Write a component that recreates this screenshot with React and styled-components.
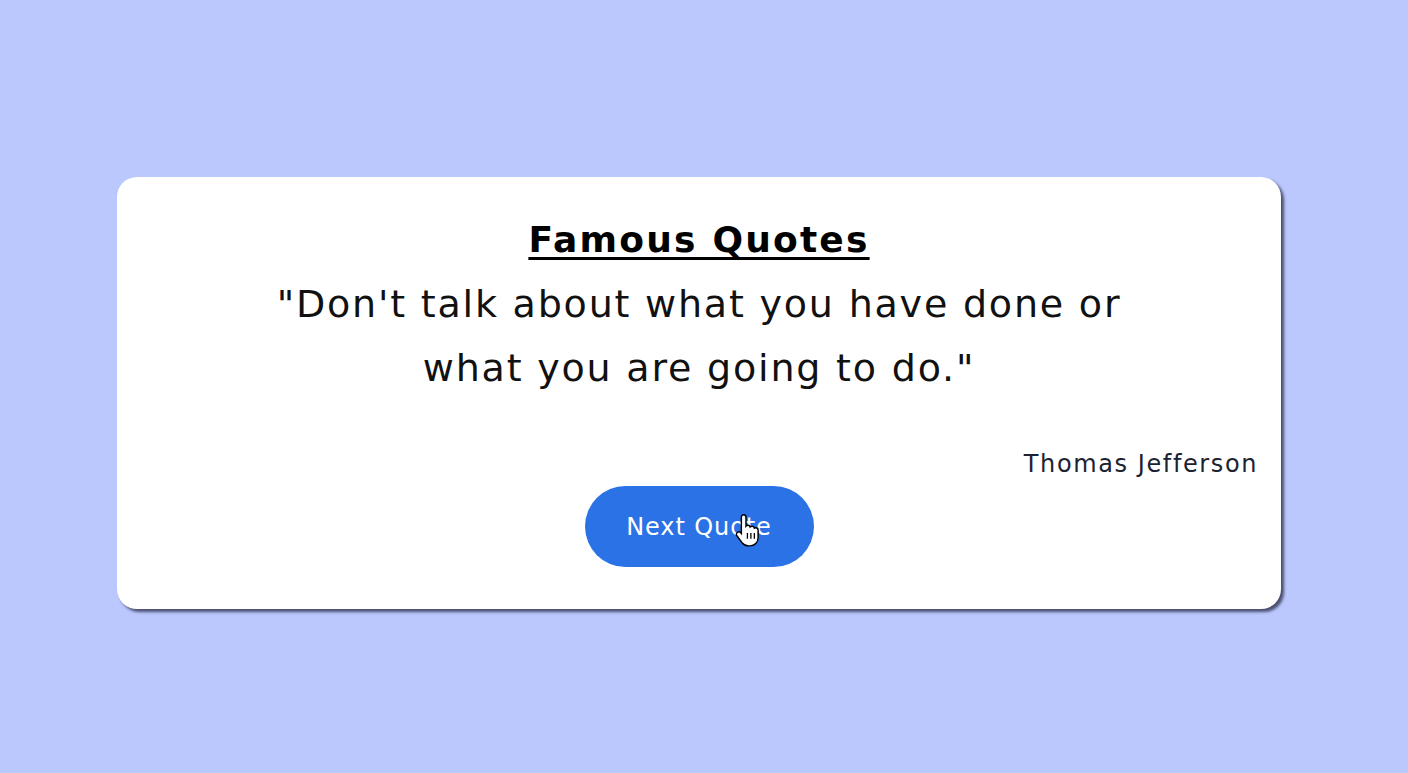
import React from 'react';
import styled, { createGlobalStyle } from 'styled-components';

const GlobalStyle = createGlobalStyle`
  html, body {
    margin: 0;
    padding: 0;
    background: #bbc8fd;
  }
  body {
    font-family: "DejaVu Sans", "Liberation Sans", sans-serif;
  }
`;

const Page = styled.main`
  min-height: 773px;
  box-sizing: border-box;
  padding: 177px 127px 0 117px;
`;

const Card = styled.section`
  box-sizing: border-box;
  width: 1164px;
  height: 432px;
  background: #ffffff;
  border-radius: 20px;
  box-shadow: 3px 3px 3px #4b5073;
  padding: 38px 23px 0;
  display: flex;
  flex-direction: column;
  align-items: center;
`;

const Title = styled.h1`
  margin: 0;
  font-size: 36px;
  font-weight: 700;
  letter-spacing: 2.2px;
  color: #000;
  text-decoration: underline;
  text-decoration-thickness: 3px;
  text-underline-offset: 5px;
  line-height: 50px;
`;

const Quote = styled.p`
  margin: 7px 0 0;
  max-width: 900px;
  text-align: center;
  font-size: 38px;
  font-weight: 400;
  letter-spacing: 1.8px;
  line-height: 64px;
  color: #111;
`;

const Author = styled.p`
  align-self: flex-end;
  margin: 49px 0 0;
  font-size: 24px;
  letter-spacing: 1.6px;
  line-height: 30px;
  color: #1c2330;
`;

const Button = styled.button`
  position: relative;
  margin-top: 7px;
  width: 229px;
  height: 81px;
  border: none;
  border-radius: 41px;
  background: #2a72e6;
  color: #fff;
  font-family: inherit;
  font-size: 24px;
  letter-spacing: 0.9px;
  cursor: pointer;
`;

const Cursor = styled.svg`
  position: absolute;
  left: 150px;
  top: 26px;
  width: 26px;
  height: 36px;
  pointer-events: none;
`;

export default function App() {
  return (
    <>
      <GlobalStyle />
      <Page>
        <Card>
          <Title>Famous Quotes</Title>
          <Quote>"Don't talk about what you have done or what you are going to do."</Quote>
          <Author>Thomas Jefferson</Author>
          <Button>
            Next Quote
            <Cursor viewBox="0 0 18 24">
              <path
                d="M6 1.5c.9 0 1.6.7 1.6 1.6v6.2c.3-.4.8-.6 1.3-.6.8 0 1.4.5 1.6 1.2.3-.3.8-.5 1.3-.5.8 0 1.5.6 1.6 1.3.3-.2.6-.3 1-.3.9 0 1.6.7 1.6 1.6v5.3c0 3.2-2.4 5.7-5.6 5.7H9.3c-1.8 0-3.3-.8-4.4-2.2L1.3 16c-.6-.8-.4-1.9.4-2.4.7-.5 1.7-.4 2.3.3l.4.5V3.1c0-.9.7-1.6 1.6-1.6z"
                fill="#fff"
                stroke="#000"
                strokeWidth="1"
              />
              <path d="M8.6 14v4M11 14v4M13.4 14v4" stroke="#000" strokeWidth="0.9" />
            </Cursor>
          </Button>
        </Card>
      </Page>
    </>
  );
}
